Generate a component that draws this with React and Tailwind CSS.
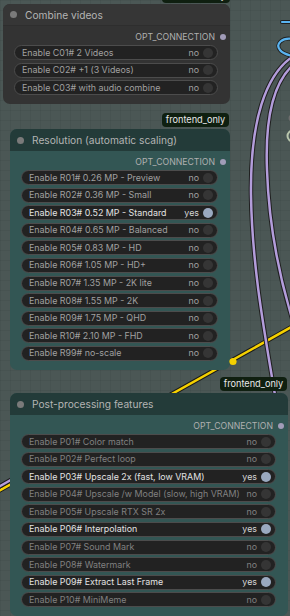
import React from "react";

function Toggle({ label, on, dim }) {
  const labelColor = on ? "text-[#e2e2e2]" : dim ? "text-[#808080]" : "text-[#a0a0a0]";
  const valColor = on ? "text-[#d6d6d6]" : dim ? "text-[#808080]" : "text-[#a0a0a0]";
  return (
    <div className="flex h-[15px] items-center rounded-full border border-[#4c4c4c] bg-[#222222] pl-[7px] pr-[4px]">
      <span className={`min-w-0 flex-1 whitespace-nowrap text-[8.9px] leading-[12px] ${labelColor}`}>{label}</span>
      <span className={`mr-[4px] text-[8.9px] leading-[12px] ${valColor}`}>{on ? "yes" : "no"}</span>
      <span className={`h-[10px] w-[10px] shrink-0 rounded-full ${on ? "bg-[#9aa9c0]" : "bg-[#353535]"}`} />
    </div>
  );
}

function Node({ className, headerBg, bodyBg, title, rows, dim }) {
  return (
    <div className={`absolute overflow-hidden rounded-[7px] ${bodyBg} ${className}`}>
      <div className={`flex h-[22px] items-center gap-[8px] pl-[7px] ${headerBg}`}>
        <span className="h-[7px] w-[7px] rounded-full bg-[#7a7a7a]" />
        <span className="whitespace-nowrap text-[10.2px] leading-[14px] text-[#b4b4b4]">{title}</span>
      </div>
      <div className="flex h-[19px] items-center justify-end gap-[5px] pr-[4px] pt-[2px]">
        <span className="text-[8.7px] leading-[12px] text-[#b0b0b0]">OPT_CONNECTION</span>
        <span className="h-[6px] w-[6px] rounded-full bg-[#a19cb8]" />
      </div>
      <div className="flex flex-col gap-[2.6px] pb-[9px] pl-[11px] pr-[12px]">
        {rows.map((r) => (
          <Toggle key={r[0]} label={r[0]} on={r[1]} dim={dim} />
        ))}
      </div>
    </div>
  );
}

function Badge({ className }) {
  return (
    <div className={`absolute flex h-[14px] items-center justify-center rounded-[4px] bg-[#0f1f10] text-[9.2px] leading-[12px] text-[#e8e8e8] ${className}`}>
      frontend_only
    </div>
  );
}

export default function App() {
  const combine = [
    ["Enable C01# 2 Videos", false],
    ["Enable C02# +1 (3 Videos)", false],
    ["Enable C03# with audio combine", false],
  ];
  const res = [
    ["Enable R01# 0.26 MP - Preview", false],
    ["Enable R02# 0.36 MP - Small", false],
    ["Enable R03# 0.52 MP - Standard", true],
    ["Enable R04# 0.65 MP - Balanced", false],
    ["Enable R05# 0.83 MP - HD", false],
    ["Enable R06# 1.05 MP - HD+", false],
    ["Enable R07# 1.35 MP - 2K lite", false],
    ["Enable R08# 1.55 MP - 2K", false],
    ["Enable R09# 1.75 MP - QHD", false],
    ["Enable R10# 2.10 MP - FHD", false],
    ["Enable R99# no-scale", false],
  ];
  const post = [
    ["Enable P01# Color match", false],
    ["Enable P02# Perfect loop", false],
    ["Enable P03# Upscale 2x (fast, low VRAM)", true],
    ["Enable P04# Upscale /w Model (slow, high VRAM)", false],
    ["Enable P05# Upscale RTX SR 2x", false],
    ["Enable P06# Interpolation", true],
    ["Enable P07# Sound Mark", false],
    ["Enable P08# Watermark", false],
    ["Enable P09# Extract Last Frame", true],
    ["Enable P10# MiniMeme", false],
  ];
  return (
    <div className="relative h-[616px] w-[290px] overflow-hidden bg-[#4b5755] font-['Inter',sans-serif] bg-[linear-gradient(rgba(0,0,0,0.05)_1px,transparent_1px),linear-gradient(90deg,rgba(0,0,0,0.05)_1px,transparent_1px)] bg-[size:10px_10px]">
      <svg className="absolute inset-0" width="290" height="616" viewBox="0 0 290 616">
        <g fill="none" strokeLinecap="round">
          <path d="M-5,493 L295,325" stroke="#1a1a1a" strokeWidth="4.5" />
          <path d="M-5,493 L295,325" stroke="#f5d000" strokeWidth="2.5" />
          <path d="M-5,489 L30,469" stroke="#1a1a1a" strokeWidth="4.5" />
          <path d="M-5,489 L30,469" stroke="#b39ddb" strokeWidth="2.5" />
          <path d="M292,57 C266,75 250,120 251,195 C252,265 264,330 275,395" stroke="#1f1f1f" strokeWidth="4.5" />
          <path d="M292,57 C266,75 250,120 251,195 C252,265 264,330 275,395" stroke="#b39ddb" strokeWidth="2.5" />
          <path d="M292,66 C272,85 265,120 267,170 C269,230 280,280 294,325" stroke="#1f1f1f" strokeWidth="4.5" />
          <path d="M292,66 C272,85 265,120 267,170 C269,230 280,280 294,325" stroke="#b39ddb" strokeWidth="2.5" />
          <path d="M282,22 L295,22" stroke="#1f1f1f" strokeWidth="4" />
          <path d="M282,22 L295,22" stroke="#5ab4f0" strokeWidth="2.2" />
          <path d="M293,39 C282,37 275,44 280,50 C283,54 288,55 293,56" stroke="#1f1f1f" strokeWidth="4" />
          <path d="M293,39 C282,37 275,44 280,50 C283,54 288,55 293,56" stroke="#5ab4f0" strokeWidth="2.2" />
          <circle cx="292" cy="118" r="3.5" fill="#6d6d6d" />
          <circle cx="293" cy="136" r="5.5" stroke="#b9c6ad" strokeWidth="2" fill="#4b5755" />
        </g>
      </svg>

      <Badge className="left-[162px] top-[-11px] w-[68px]" />
      <Node
        className="left-[3px] top-[4px] w-[227px]"
        headerBg="bg-[#363636] border-b border-[#2e2e2e]"
        bodyBg="bg-[#333333]"
        title="Combine videos"
        rows={combine}
      />
      <Badge className="left-[162px] top-[113px] w-[67px]" />
      <Node
        className="left-[10px] top-[129px] w-[220px]"
        headerBg="bg-[#233b39]"
        bodyBg="bg-[#335654]"
        title="Resolution (automatic scaling)"
        rows={res}
      />
      <Badge className="left-[220px] top-[377px] w-[67px]" />
      <Node
        className="left-[10px] top-[393px] w-[278px]"
        headerBg="bg-[#233b39]"
        bodyBg="bg-[#335654]"
        title="Post-processing features"
        rows={post}
        dim
      />
      <svg className="absolute inset-0 pointer-events-none" width="290" height="616" viewBox="0 0 290 616">
        <circle cx="233" cy="361.5" r="3.6" fill="#f5d000" />
      </svg>
    </div>
  );
}
